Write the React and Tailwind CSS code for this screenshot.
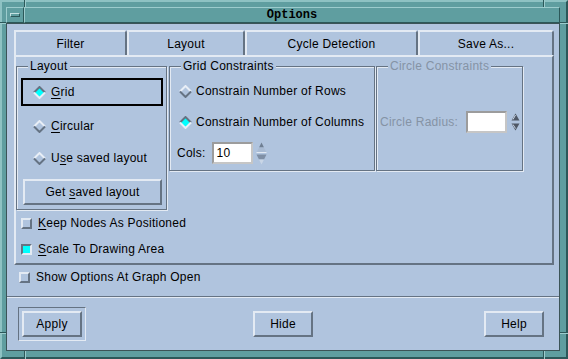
import React from "react";

const up = "border-t-[#e3eaf3] border-l-[#e3eaf3] border-r-[#657383] border-b-[#657383]";
const down = "border-t-[#657383] border-l-[#657383] border-r-[#e3eaf3] border-b-[#e3eaf3]";

const Diamond = ({ on }) => (
  <svg width="13" height="13" viewBox="0 0 13 13" className="shrink-0">
    <polygon points="6.5,1.5 11.5,6.5 6.5,11.5 1.5,6.5" fill={on ? "#00ffff" : "#b0c4de"} />
    <polyline points="1,6.5 6.5,1 12,6.5" fill="none" stroke={on ? "#657383" : "#e8eef6"} strokeWidth="2" />
    <polyline points="1,6.5 6.5,12 12,6.5" fill="none" stroke={on ? "#e8eef6" : "#657383"} strokeWidth="2" />
  </svg>
);

const Radio = ({ on, className, children }) => (
  <div className={`h-[28px] flex items-center ${className}`}>
    <Diamond on={on} />
    <span>{children}</span>
  </div>
);

const Check = ({ on, className, children }) => (
  <div className={`h-[18px] flex items-center gap-[6px] ${className}`}>
    <div className={`w-[11px] h-[11px] border-2 ${on ? "bg-[#00ffff] " + down : up}`} />
    <span>{children}</span>
  </div>
);

const Tab = ({ className, children }) => (
  <div
    className={`h-[25px] flex items-center justify-center border-t-2 border-l-2 border-r-2 border-t-[#e3eaf3] border-l-[#e3eaf3] border-r-[#657383] rounded-tr-[3px] ${className}`}
  >
    {children}
  </div>
);

const Frame = ({ title, dim, className, children }) => (
  <fieldset
    className={`m-0 p-0 min-w-0 border border-[#657383] shadow-[inset_1px_1px_0_#e3eaf3,1px_1px_0_#e3eaf3] ${className}`}
  >
    <legend className={`ml-[11px] px-[2px] leading-[14px] bg-[#b0c4de] ${dim ? "text-[#8593a5]" : ""}`}>
      {title}
    </legend>
    {children}
  </fieldset>
);

const U = ({ children }) => <span className="underline underline-offset-2">{children}</span>;

const Button = ({ className, children }) => (
  <div className={`w-[60px] h-[26px] flex items-center justify-center border-2 ${up} ${className}`}>
    <span>{children}</span>
  </div>
);

const Field = ({ children }) => (
  <div className="w-[41px] h-[22px] flex items-center pl-[3px] bg-white border-2 border-t-[#9c9c9c] border-l-[#9c9c9c] border-r-[#c6c6c6] border-b-[#c6c6c6]">
    {children}
  </div>
);

const Spin = () => (
  <svg width="11" height="23" viewBox="0 0 11 23" className="shrink-0">
    <polygon points="5.5,0.5 8,5.5 3,5.5" fill="#6f7f93" />
    <polygon points="3,5.5 8,5.5 10.5,10.5 0.5,10.5" fill="#a9bbd3" />
    <line x1="0.5" y1="10.5" x2="10.5" y2="10.5" stroke="#e3eaf3" />
    <polygon points="0.5,12.5 10.5,12.5 8,17.5 3,17.5" fill="#7f8fa5" />
    <polygon points="3,17.5 8,17.5 5.5,22.5" fill="#c9d6e6" />
  </svg>
);

const SmallSpin = () => (
  <svg width="9" height="18" viewBox="0 0 9 18" className="shrink-0">
    <polygon points="4.5,0.5 8.5,7.5 0.5,7.5" fill="#4f5866" />
    <line x1="4.5" y1="2" x2="2" y2="6.5" stroke="#c9d6e6" />
    <polygon points="0.5,10.5 8.5,10.5 4.5,17.5" fill="#4f5866" />
    <line x1="2" y1="11.5" x2="4.5" y2="15.5" stroke="#c9d6e6" />
  </svg>
);

export default function App() {
  return (
    <div className="relative w-[568px] h-[359px] flex flex-col bg-[#5f9ea0] border-2 border-t-[#8ec2c3] border-l-[#8ec2c3] border-r-[#2c5859] border-b-[#2c5859] pt-[5px] pl-[4px] pr-[6px] pb-[6px] font-['Liberation_Sans',Arial,sans-serif] text-[12px] tracking-[0.25px] text-black leading-none select-none">
      {/* frame resize ticks */}
      <div className="absolute left-[22px] top-[-2px] w-[2px] h-[7px] border-l border-r border-l-[#2c5859] border-r-[#9ccccd]" />
      <div className="absolute left-[541px] top-[-2px] w-[2px] h-[7px] border-l border-r border-l-[#2c5859] border-r-[#9ccccd]" />
      <div className="absolute left-[22px] bottom-[-2px] w-[2px] h-[8px] border-l border-r border-l-[#2c5859] border-r-[#9ccccd]" />
      <div className="absolute left-[541px] bottom-[-2px] w-[2px] h-[8px] border-l border-r border-l-[#2c5859] border-r-[#9ccccd]" />
      <div className="absolute left-[-2px] top-[20px] w-[6px] h-[2px] border-t border-b border-t-[#2c5859] border-b-[#9ccccd]" />
      <div className="absolute right-[-2px] top-[20px] w-[8px] h-[2px] border-t border-b border-t-[#2c5859] border-b-[#9ccccd]" />
      <div className="absolute left-[-2px] top-[330px] w-[6px] h-[2px] border-t border-b border-t-[#2c5859] border-b-[#9ccccd]" />
      <div className="absolute right-[-2px] top-[330px] w-[8px] h-[2px] border-t border-b border-t-[#2c5859] border-b-[#9ccccd]" />

      {/* title bar */}
      <div className="h-[16px] flex shrink-0">
        <div className="w-[18px] h-full flex items-center justify-center border border-t-[#9ccccd] border-l-[#9ccccd] border-r-[#2c5859] border-b-[#2c5859]">
          <div className="w-[10px] h-[4px] border border-t-[#c4e2e2] border-l-[#c4e2e2] border-r-[#2c5859] border-b-[#2c5859]" />
        </div>
        <div className="flex-1 h-full flex items-center justify-center border border-t-[#9ccccd] border-l-[#9ccccd] border-r-[#2c5859] border-b-[#2c5859]">
          <span className="font-['Liberation_Mono',monospace] font-bold text-[12px] tracking-normal">Options</span>
        </div>
      </div>

      {/* dialog body */}
      <div className="flex-1 flex flex-col bg-[#b0c4de] border border-[#3b5457]">
        <div className="flex ml-[7px] mt-[6px]">
          <Tab className="w-[113px]">Filter</Tab>
          <Tab className="w-[118px]">Layout</Tab>
          <Tab className="w-[173px]">Cycle Detection</Tab>
          <Tab className="w-[136px]">Save As...</Tab>
        </div>

        <div className={`ml-[7px] w-[540px] h-[210px] flex flex-col border-2 ${up}`}>
          <div className="flex items-start mt-[2px]">
            <Frame title="Layout" className="w-[151px] h-[151px]">
              <div className="flex flex-col pt-[5px] pl-[4px] pr-[3px]">
                <Radio on className="border-2 border-black pl-[10px] gap-[5px]">
                  <U>G</U>rid
                </Radio>
                <Radio className="mt-[6px] border-2 border-transparent pl-[10px] gap-[5px]">
                  <U>C</U>ircular
                </Radio>
                <Radio className="mt-[4px] border-2 border-transparent pl-[10px] gap-[5px]">
                  U<U>s</U>e saved layout
                </Radio>
                <div className={`mt-[7px] ml-[2px] w-[139px] h-[26px] flex items-center justify-center border-2 ${up}`}>
                  <span>
                    Get <U>s</U>aved layout
                  </span>
                </div>
              </div>
            </Frame>

            <Frame title="Grid Constraints" className="ml-[2px] w-[206px] h-[112px]">
              <div className="flex flex-col pt-[4px]">
                <Radio className="pl-[9px] gap-[4px]">Constrain Number of Rows</Radio>
                <Radio on className="mt-[3px] pl-[9px] gap-[4px]">
                  Constrain Number of Columns
                </Radio>
                <div className="mt-[3px] h-[28px] flex items-center pl-[7px]">
                  <span>Cols:</span>
                  <div className="ml-[6px]">
                    <Field>10</Field>
                  </div>
                  <div className="ml-[3px]">
                    <Spin />
                  </div>
                </div>
              </div>
            </Frame>

            <Frame title="Circle Constraints" dim className="ml-[1px] w-[147px] h-[112px]">
              <div className="pt-[35px]">
                <div className="h-[28px] flex items-center pl-[3px]">
                  <span className="text-[#8593a5]">Circle Radius:</span>
                  <div className="ml-[8px]">
                    <Field />
                  </div>
                  <div className="ml-[4px]">
                    <SmallSpin />
                  </div>
                </div>
              </div>
            </Frame>
          </div>

          <Check className="ml-[5px] mt-[4px]">
            <U>K</U>eep Nodes As Positioned
          </Check>
          <Check on className="ml-[5px] mt-[8px]">
            <U>S</U>cale To Drawing Area
          </Check>
        </div>

        <Check className="ml-[12px] mt-[3px]">Show Options At Graph Open</Check>

        <div className="mt-[10px] h-[2px] border-t border-b border-t-[#657383] border-b-[#e3eaf3]" />

        <div className="mt-[9px] flex items-start justify-between pl-[11px] pr-[15px]">
          <div className={`p-[3px] border ${down}`}>
            <Button>Apply</Button>
          </div>
          <Button className="mt-[4px] mr-[4px]">Hide</Button>
          <Button className="mt-[4px]">Help</Button>
        </div>
      </div>
    </div>
  );
}
